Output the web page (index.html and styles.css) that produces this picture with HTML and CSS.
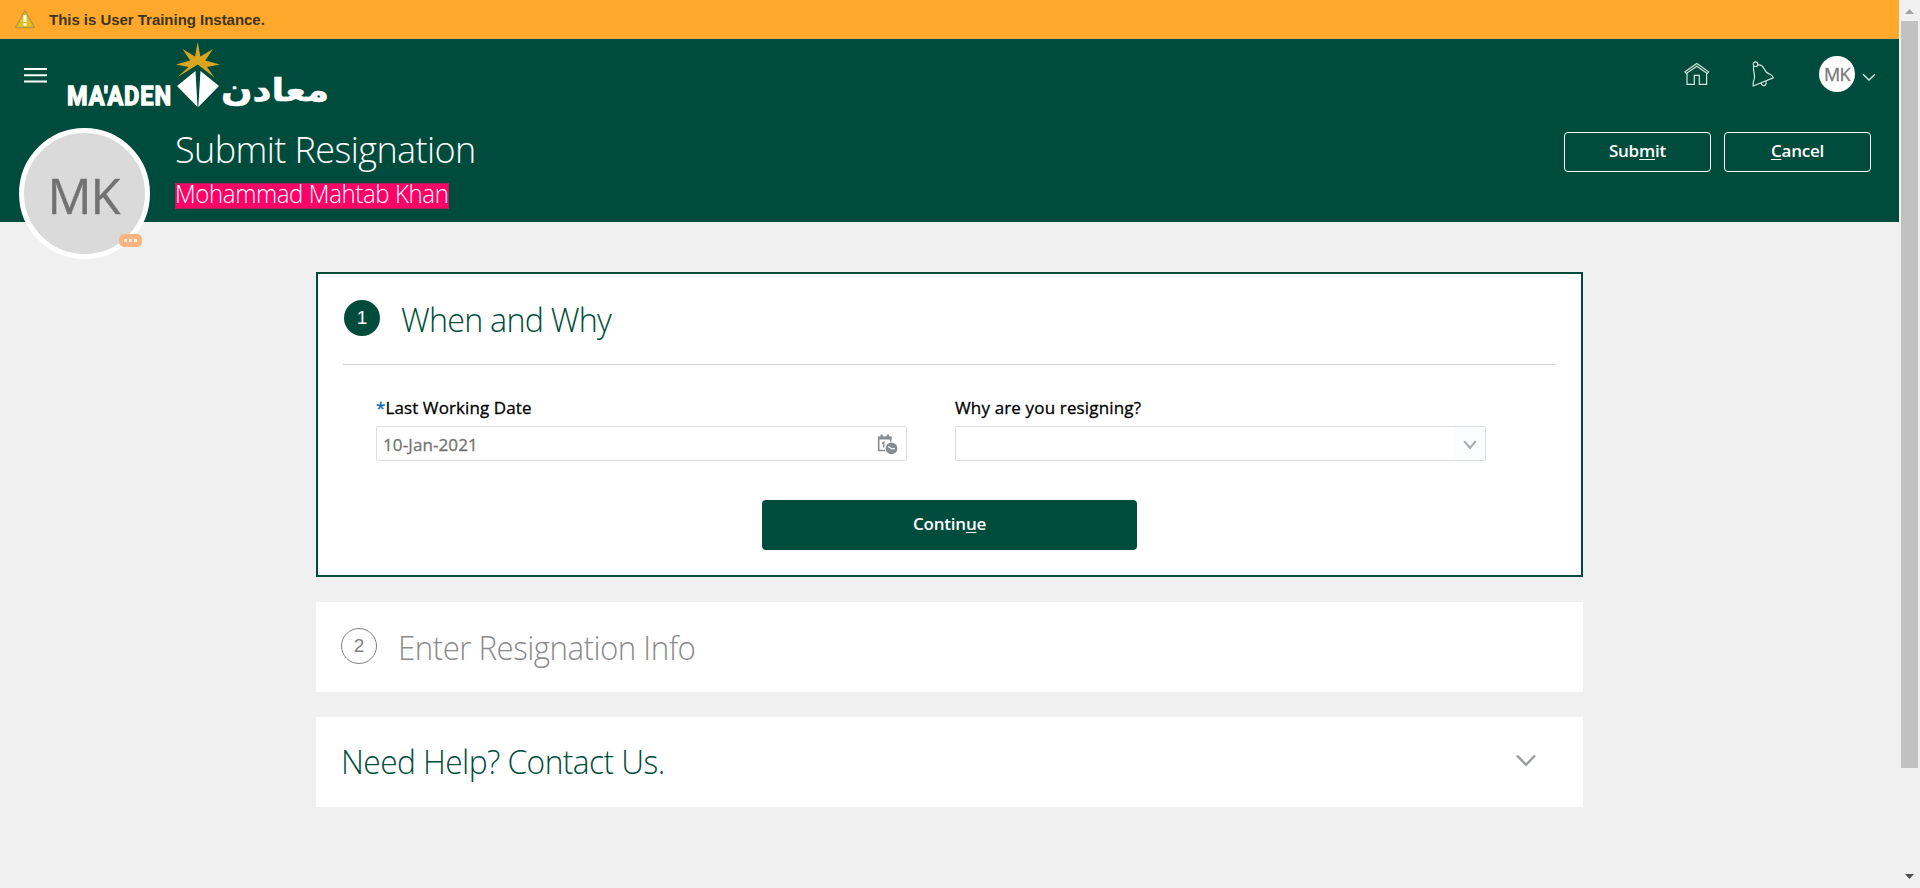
FILE: index.html
```
<!DOCTYPE html>
<html lang="en">
<head>
<meta charset="utf-8">
<title>Submit Resignation</title>
<link rel="stylesheet" href="styles.css">
</head>
<body>
<div class="window">
  <div class="page">
    <div class="banner">
      <svg class="warn" width="22" height="20" viewBox="0 0 22 20"><path d="M11 1.6 L20.4 18.4 H1.6 Z" fill="#e3bd22" stroke="#b99a3c" stroke-width="1.4" stroke-linejoin="round"/><path d="M11 6v7" stroke="#fff" stroke-width="3"/><path d="M11 14.2v2.6" stroke="#fff" stroke-width="3"/></svg>
      <span class="banner-text">This is User Training Instance.</span>
    </div>
    <header class="header">
      <div class="topbar">
        <svg class="menu" width="23" height="15" viewBox="0 0 23 15"><path d="M0 1h23M0 7.2h23M0 13.5h23" stroke="#fff" stroke-width="1.9"/></svg>
        <svg class="logo" width="266" height="68" viewBox="64 41 266 68">
          <path d="M197.700 42 L200.400 56.500 L213 49 L205.300 60.500 L220 64.500 L207 67 L214.500 77.500 L197.700 64.500 L177 77.500 L188.500 67 L176 64.500 L190.200 60.500 L182.500 49 L195 56.500 Z" fill="#d9a420"/>
          <path d="M195.500 71 L197.500 107 L177 86 Z M200.500 71 L198.300 107 L219 86 Z" fill="#fff"/>
          <text class="logo-latin" x="67" y="105" textLength="105" lengthAdjust="spacingAndGlyphs">MA'ADEN</text>
          <text class="logo-arabic" transform="translate(221 103) scale(1 1.150)" x="0" y="-2" textLength="108" lengthAdjust="spacingAndGlyphs">معادن</text>
        </svg>
        <div class="tools">
          <svg class="home" width="26" height="24" viewBox="0 0 26 24" fill="none" stroke="#d5e5df" stroke-width="1.2"><path d="M1 9.800 L12.800 1.500 L24.600 9.800 L23.300 11.500 L12.800 4.200 L2.300 11.500 Z"/><path d="M3 11.300V22.400H10.300V13.300H15.300V22.400H22.600V11.300"/></svg>
          <svg class="bell" width="24" height="27" viewBox="0 0 24 27" fill="none" stroke="#d5e5df" stroke-width="1.200"><circle cx="4.500" cy="3.200" r="2.300"/><path d="M2.800 5 C1.200 8 3.800 12 3.500 16 C3.300 19.500 1.500 20.500 2.200 25 L22.300 16.800 C21.500 12.800 18 14 15.300 11 C12.500 7.500 12 3.300 6.800 4"/><path d="M10 22 C11.500 26.500 16.500 24.500 14.800 20.200"/></svg>
          <span class="user">MK</span>
          <svg class="user-arrow" width="14" height="9" viewBox="0 0 14 9"><path d="M1 1.200 L7 7 L13 1.200" fill="none" stroke="#d5e5df" stroke-width="1.400"/></svg>
        </div>
      </div>
      <div class="titlebar">
        <div class="avatar"><span class="avatar-text">MK</span><span class="badge"><i></i><i></i><i></i></span></div>
        <div class="titles">
          <h1 class="title">Submit Resignation</h1>
          <div class="name"><span class="name-text">Mohammad Mahtab Khan</span></div>
        </div>
        <div class="actions">
          <button class="action">Sub<u>m</u>it</button>
          <button class="action"><u>C</u>ancel</button>
        </div>
      </div>
    </header>
    <main class="main">
      <section class="card active">
        <div class="card-head">
          <span class="step step-on">1</span>
          <h2 class="heading when">When and Why</h2>
        </div>
        <div class="fields">
          <div class="field">
            <label class="label date-label"><span class="star">*</span>Last Working Date</label>
            <div class="input"><span class="value">10-Jan-2021</span>
              <svg class="cal" width="21" height="21" viewBox="0 0 21 21"><path d="M1.700 3.500h12v13h-12z" fill="#fff" stroke="#878c90" stroke-width="1.600"/><path d="M1 2.500h13.500v3H1zM3.500 .5h2.200v4H3.500zM9.800 .5H12v4H9.800z" fill="#878c90"/><path d="M5 9.500l1.800-1.200V13.500" fill="none" stroke="#878c90" stroke-width="1.400"/><circle cx="14.500" cy="14.300" r="6.700" fill="#fff"/><circle cx="14.500" cy="14.300" r="5.900" fill="#878c90"/><path d="M11.300 12.500l3.200 2.200h3.200" fill="none" stroke="#fff" stroke-width="1.200"/></svg>
            </div>
          </div>
          <div class="field">
            <label class="label why-label">Why are you resigning?</label>
            <div class="input select"><span class="drop"><svg width="14" height="10" viewBox="0 0 14 10"><path d="M1.200 1.200L7 8L12.800 1.200" fill="none" stroke="#a6a8aa" stroke-width="2"/></svg></span></div>
          </div>
        </div>
        <button class="continue">Contin<u>u</u>e</button>
      </section>
      <section class="card step-card">
        <span class="step step-off">2</span>
        <h2 class="heading enter">Enter Resignation Info</h2>
      </section>
      <section class="card help-card">
        <h2 class="heading help">Need Help? Contact Us.</h2>
        <svg class="help-arrow" width="20" height="13" viewBox="0 0 20 13"><path d="M1 1.500L10 10.800L19 1.500" fill="none" stroke="#999c9e" stroke-width="2.400"/></svg>
      </section>
    </main>
  </div>
  <div class="scroll">
    <svg width="9" height="5" viewBox="0 0 9 5"><path d="M0 5L4.500 0L9 5z" fill="#a3a3a3"/></svg>
    <div class="thumb"></div>
    <svg class="down" width="9" height="5" viewBox="0 0 9 5"><path d="M0 0L4.500 5L9 0z" fill="#505050"/></svg>
  </div>
</div>
</body>
</html>
```
FILE: styles.css
```
* { box-sizing: border-box; }
body { margin: 0; background: #f0f0f0; font-family: "Open Sans", "Noto Sans", sans-serif; overflow: hidden; }
svg { display: block; flex: none; overflow: visible; }
h1, h2 { margin: 0; font-weight: 300; white-space: nowrap; transform-origin: 0 50%; }
button { font-family: inherit; padding: 0; }
u { text-decoration: underline; text-decoration-thickness: 1px; text-underline-offset: 2px; text-decoration-skip-ink: none; }
.window { display: flex; width: 1920px; height: 888px; }
.page { width: 1899px; }
.banner { height: 39px; background: #ffa92c; border-bottom: 1px solid #e6ad45; display: flex; align-items: center; padding-left: 14px; }
.banner-text { margin: 2px 0 0 13px; font: bold 15px/20px "Liberation Sans", Arial, sans-serif; color: #403418; letter-spacing: -0.03px; }
.header { height: 183px; background: #004c3c; }
.topbar { height: 89px; display: flex; padding-left: 24px; }
.menu { margin-top: 29px; }
.logo { margin: 2px 0 0 17px; }
.logo-latin { font: bold 26px "Roboto", sans-serif; fill: #fff; stroke: #fff; stroke-width: 1.3px; letter-spacing: 1px; }
.logo-arabic { font: bold 27px "DejaVu Sans", sans-serif; fill: #fff; stroke: #fff; stroke-width: 0.5px; }
.tools { margin-left: auto; display: flex; padding-right: 23px; }
.home { margin-top: 23px; }
.bell { margin: 22px 0 0 41px; }
.user { width: 36px; height: 36px; margin: 17px 0 0 44px; border-radius: 50%; background: #fff; color: #777; font-size: 18px; line-height: 36px; text-align: center; letter-spacing: -0.7px; -webkit-text-stroke: 0.3px #777; }
.user-arrow { margin: 34px 0 0 7px; }
.titlebar { display: flex; padding: 0 28px 0 19px; }
.avatar { position: relative; width: 131px; height: 131px; border: 5px solid #fff; border-radius: 50%; background: #dadada; color: #727272; font-size: 49px; line-height: 124px; text-align: center; letter-spacing: -1px; text-indent: -2px; -webkit-text-stroke: 0.4px #727272; }
.badge { position: absolute; left: 95px; top: 101px; width: 23px; height: 13px; border-radius: 5px; background: #f8b582; display: flex; justify-content: center; align-items: center; gap: 2px; }
.badge i { width: 3px; height: 3px; background: #fff0e0; }
.titles { margin-left: 25px; }
.title { color: #fff; font-size: 37px; line-height: 42px; letter-spacing: -0.6px; transform: scaleX(0.973); }
.name { width: 274px; height: 26px; margin-top: 13px; background: #ff0066; border: 1px solid #b81a58; color: #fff; font-weight: 300; font-size: 25px; line-height: 19px; white-space: nowrap; }
.name-text { display: inline-block; margin-left: -1px; letter-spacing: -0.4px; transform: scaleX(0.96); transform-origin: 0 50%; }
.actions { margin: 4px 0 0 auto; display: flex; gap: 13px; }
.action { width: 147px; height: 40px; border: 1px solid #fff; border-radius: 4px; background: transparent; color: #fff; font-weight: 600; font-size: 17px; line-height: 36px; padding-bottom: 2px; letter-spacing: -0.2px; }
.main { width: 1267px; margin: 50px 0 0 316px; display: flex; flex-direction: column; gap: 25px; }
.card { background: #fff; }
.active { height: 305px; border: 2px solid #004c3c; padding: 0 25px; display: flex; flex-direction: column; align-items: center; }
.card-head { align-self: stretch; height: 91px; border-bottom: 1px solid #cdd0d0; display: flex; }
.step { width: 36px; height: 36px; border-radius: 50%; font: 19px/36px "Liberation Sans", Arial, sans-serif; text-align: center; }
.step-on { margin: 26px 0 0 1px; background: #004c3c; color: #fff; }
.step-off { border: 1px solid #808080; color: #808080; line-height: 34px; }
.heading { color: #004c3c; font-size: 33.5px; line-height: 46px; }
.when { margin: 22px 0 0 21px; letter-spacing: -0.8px; transform: scaleX(0.963); }
.fields { align-self: stretch; display: flex; gap: 48px; padding: 31px 0 0 33px; }
.field { width: 531px; }
.label { display: flex; height: 30px; font-size: 17px; line-height: 24px; color: #000; -webkit-text-stroke: 0.3px #000; letter-spacing: 0.15px; }
.date-label { letter-spacing: 0.1px; }
.star { color: #0066b3; -webkit-text-stroke-color: #0066b3; }
.input { height: 35px; border: 1px solid #dcdfe1; border-radius: 2px; display: flex; align-items: center; justify-content: space-between; padding: 0 8px 0 6px; }
.cal { margin-top: 2px; }
.value { margin-top: 1px; font-size: 17px; line-height: 33px; color: #737373; -webkit-text-stroke: 0.3px #737373; letter-spacing: 0.1px; }
.select { justify-content: flex-end; padding: 0; }
.drop { width: 32px; height: 33px; background: #fbfcfe; display: flex; align-items: center; padding-left: 10px; padding-top: 2px; }
.continue { width: 375px; height: 50px; margin-top: 39px; border: 0; border-radius: 4px; background: #004c3c; color: #fff; font-weight: 600; font-size: 17px; line-height: 48px; padding-bottom: 2px; letter-spacing: -0.2px; }
.step-card { height: 90px; padding: 0 25px; display: flex; align-items: center; }
.step-card .step { margin-top: -2px; }
.enter { margin: 0 0 0 21px; color: #8b8b8b; letter-spacing: -0.6px; transform: scaleX(0.936); }
.help-card { height: 90px; padding: 0 47px 0 25px; display: flex; align-items: center; justify-content: space-between; }
.help { margin-top: -2px; letter-spacing: -0.6px; transform: scaleX(0.947); }
.help-arrow { margin-top: -4px; }
.scroll { width: 21px; background: #f0f0f0; display: flex; flex-direction: column; align-items: center; padding-top: 9px; }
.thumb { width: 17px; height: 747px; margin-top: 7px; background: #c1c1c1; }
.down { margin-top: 106px; }
```
